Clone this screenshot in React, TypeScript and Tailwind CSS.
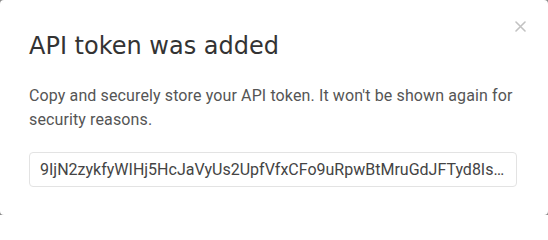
const token = "9IjN2zykfyWIHj5HcJaVyUs2UpfVfxCFo9uRpwBtMruGdJFTyd8IsQk3vLm7pXa2";

export default function App() {
  return (
    <div className="h-[215px] w-[548px] overflow-hidden bg-[#8a8a8a]">
      <div className="relative h-full w-full rounded-[4px] bg-white px-[29px] pt-[30px]">
        <button className="absolute right-[22px] top-[21px] text-[#c2c2c2]">
          <svg width="11" height="11" viewBox="0 0 11 11" fill="none" stroke="currentColor" strokeWidth="1.6" strokeLinecap="round">
            <path d="M1 1L10 10M10 1L1 10" />
          </svg>
        </button>
        <h2 className="font-['DejaVu_Sans',sans-serif] text-[24px] leading-[32px] text-[#333]">
          API token was added
        </h2>
        <p className="mt-[22px] w-[490px] font-['Roboto',sans-serif] text-[16px] leading-[24px] tracking-[0.12px] text-[#555]">
          Copy and securely store your API token. It won't be shown again for security reasons.
        </p>
        <div className="mt-[20px] h-[35px] w-[488px] rounded-[4px] border border-[#e3e3e3] px-[10px] font-['Roboto',sans-serif] text-[16px] leading-[33px] text-[#444]">
          <div className="truncate">{token}</div>
        </div>
      </div>
    </div>
  );
}
